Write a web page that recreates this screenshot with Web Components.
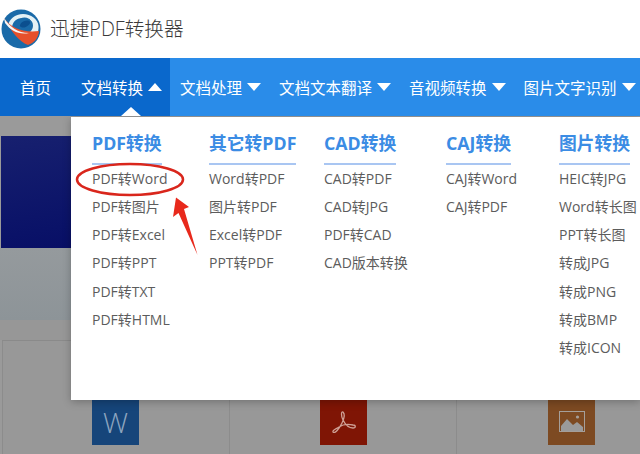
<!DOCTYPE html>
<html lang="zh-CN"><head><meta charset="utf-8"><title>迅捷PDF转换器</title>
<style>
html,body{margin:0;padding:0;background:#fff}
body{width:640px;height:454px;overflow:hidden;font-family:"Open Sans","Noto Sans CJK SC",sans-serif;}
</style></head><body>
<app-header>迅捷PDF转换器</app-header>
<nav-bar>
  <nav-item dark>首页</nav-item>
  <nav-item dark caret="up" pointer>文档转换</nav-item>
  <nav-item caret="down">文档处理</nav-item>
  <nav-item caret="down">文档文本翻译</nav-item>
  <nav-item caret="down">音视频转换</nav-item>
  <nav-item caret="down">图片文字识别</nav-item>
</nav-bar>
<page-stage>
  <mega-menu slot="menu">
    <menu-col title="PDF转换" w="117"><a>PDF转Word</a><a>PDF转图片</a><a>PDF转Excel</a><a>PDF转PPT</a><a>PDF转TXT</a><a>PDF转HTML</a></menu-col>
    <menu-col title="其它转PDF" w="115"><a>Word转PDF</a><a>图片转PDF</a><a>Excel转PDF</a><a>PPT转PDF</a></menu-col>
    <menu-col title="CAD转换" w="122"><a>CAD转PDF</a><a>CAD转JPG</a><a>PDF转CAD</a><a>CAD版本转换</a></menu-col>
    <menu-col title="CAJ转换" w="113"><a>CAJ转Word</a><a>CAJ转PDF</a></menu-col>
    <menu-col title="图片转换" w="81"><a>HEIC转JPG</a><a>Word转长图</a><a>PPT转长图</a><a>转成JPG</a><a>转成PNG</a><a>转成BMP</a><a>转成ICON</a></menu-col>
  </mega-menu>
</page-stage>
<script>
function def(name, css, html, init){
  customElements.define(name, class extends HTMLElement{
    constructor(){super();const r=this.attachShadow({mode:'open'});r.innerHTML='<style>'+css+'</style>'+(typeof html==='function'?'':html);this._h=html;}
    connectedCallback(){ if(typeof this._h==='function'){this.shadowRoot.innerHTML+=this._h(this);this._h=null;} if(init) init(this); }
  });
}
const logo=`<svg width="40" height="40" viewBox="0 0 40 40" aria-hidden="true">
<circle cx="20" cy="20" r="19.5" fill="#1a6aa8"/>
<path d="M7 17C8 10 14 5 22 5c8 0 15 5 15.500 12 .2 3-.3 5-1 7L29 23c2-2 3-4 3-6.500C32 11 27 9 22 9c-6 0-10 3-11 9z" fill="#e4f1f5"/>
<ellipse cx="22" cy="16" rx="9" ry="7" fill="#1a6aa8" transform="rotate(-25 22 16)"/>
<ellipse cx="24" cy="15" rx="5.500" ry="3" fill="#0b4f8f" transform="rotate(-25 24 15)"/>
<path d="M3 9C10 19 22 24 38 22c-.5 7-5 12-11 14C18 33 10 22 3 9z" fill="#e6502c"/>
<path d="M3 9c6 9 14 15 25 15-10 2-18-2-24-10z" fill="#f6f6f6"/>
</svg>`;
def('app-header',`:host{display:flex;align-items:center;height:58px;padding:0 0 0 1px;gap:9px;box-sizing:border-box;color:#3a3a3a;font-size:19.700px;font-weight:300}
 .t{position:relative;top:-2px;white-space:nowrap}`,`${logo}<span class="t"><slot></slot></span>`);
def('nav-bar',`:host{display:flex;height:58px;background:#2a8ce9;color:#fff;overflow:hidden}`,`<slot></slot>`);
def('nav-item',`:host{display:flex;flex:none;white-space:nowrap;align-items:center;position:relative;padding:0 8px 0 10px;font-size:15.500px;height:100%;box-sizing:border-box;gap:5px}
 :host([dark]){background:#0a68cc}
 :host(:first-child){padding:0 20px 0 20px}
 .c{width:0;height:0;border-left:7.500px solid transparent;border-right:7.500px solid transparent}
 .down{border-top:8px solid #fff}.up{border-bottom:8px solid #fff}
 .p{position:absolute;left:50px;bottom:0;width:0;height:0;border-left:10px solid transparent;border-right:10px solid transparent;border-bottom:9px solid #fff}`,
 h=>{const c=h.getAttribute('caret');return `<slot></slot>${c?`<span class="c ${c}"></span>`:''}${h.hasAttribute('pointer')?'<span class="p"></span>':''}`});
def('page-stage',`:host{display:block;position:relative;height:338px;background:#9a9a9a;overflow:hidden}
 .gap{height:20px}
 .banner{height:112px;background:linear-gradient(170deg,#17206f 0,#0a1268 45%,#00005a 100%);margin-left:1px}
 .band{height:72px;background:linear-gradient(#959a9d,#8d9498)}
 .soft{height:20px;background:#979797}
 .cards{display:grid;grid-template-columns:227px 227px 1fr;height:114px;border-top:1px solid #8a8a8a;margin-left:2px;background:#989898}
 .card{border-left:1px solid #8c8c8c;padding:57px 0 0 89px;box-sizing:border-box}
 .card:nth-child(2){padding-left:90px}
 .card:nth-child(3){padding-left:91px}
 .ico{width:47px;height:47px;display:flex;align-items:center;justify-content:center}
 .w{background:#16457a;color:#8ea6c0;font:28px "Open Sans",sans-serif;font-weight:300}
 .pdf{background:#7f1505}.img{background:#7d4a22}
 .note{position:absolute;left:0;top:0;pointer-events:none}`,
 `<div class="gap"></div><div class="banner"></div><div class="band"></div><div class="soft"></div>
 <div class="cards">
  <div class="card"><div class="ico w">W</div></div>
  <div class="card"><div class="ico pdf"><svg width="32" height="32" viewBox="0 0 32 32" fill="none" stroke="#cfa196" stroke-width="1.300"><path d="M5 26c2 2 6-3 9-9 2-4 3-9 1-11-2-1-2 4 0 8 2 4 6 8 10 8 3 0 3-3 0-3-5-1-11 0-14 2-3 2-7 3-6 5z"/></svg></div></div>
  <div class="card"><div class="ico img"><svg width="26" height="22" viewBox="0 0 26 22"><rect x=".5" y=".5" width="25" height="20" fill="none" stroke="#a59f9a"/><path d="M2 20v-5l6-7 6 6 4-3 6 5v4z" fill="#9a9a9a"/><circle cx="18.500" cy="6" r="1.600" fill="#a59f9a"/></svg></div></div>
 </div>
 <slot name="menu"></slot>
 <svg class="note" width="640" height="338" viewBox="0 116 640 338">
  <ellipse cx="130" cy="179.500" rx="53" ry="15.500" fill="none" stroke="#d9261c" stroke-width="2.500"/>
  <path d="M176 197.500L189 207 184 209 197.500 255 178.500 213 173 217z" fill="#e8291c"/>
 </svg>`);
def('mega-menu',`:host{position:absolute;left:71px;top:1px;width:569px;height:283px;background:#fff;box-shadow:0 2px 8px rgba(0,0,0,.25);display:flex;padding:12px 0 0 21px;box-sizing:border-box}`,`<slot></slot>`);
def('menu-col',`:host{display:flex;flex-direction:column;align-items:flex-start;flex:none;color:#5c5c5c;font-size:14px}
 h3{margin:0;font-size:17.800px;line-height:28px;padding-bottom:6px;font-weight:700;color:#3b8ce4;border-bottom:2px solid #a9c6f2;white-space:nowrap}
 ::slotted(a){display:block;height:28.170px;line-height:28px;white-space:nowrap}`,
 h=>`<h3>${h.getAttribute('title')}</h3><slot></slot>`,
 el=>{el.style.width=el.getAttribute('w')+'px';});
</script>
</body></html>
